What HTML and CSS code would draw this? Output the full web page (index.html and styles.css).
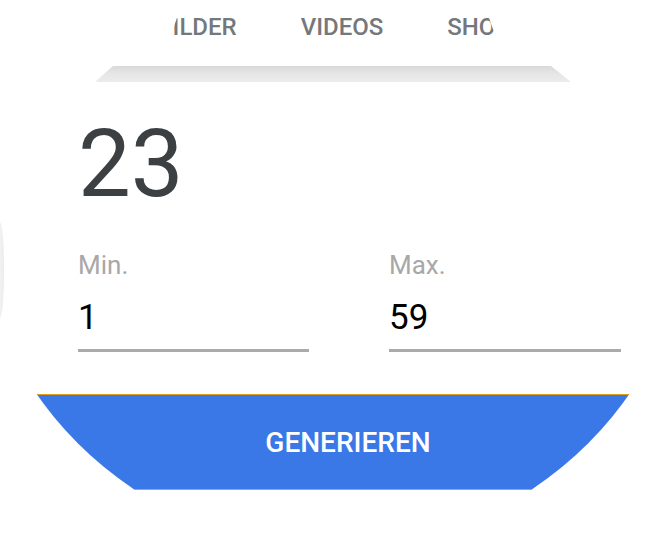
FILE: index.html
```html
<!DOCTYPE html>
<html lang="de">
<head>
    <meta charset="UTF-8">
    <meta name="viewport" content="width=device-width, initial-scale=1.0">
    <title>Zufallszahl</title>
    <link rel="stylesheet" href="styles.css">
</head>
<body>
    <div class="tabs">
        <span class="tab tab-left">BILDER</span>
        <span class="tab">VIDEOS</span>
        <span class="tab tab-right">SHOPPING</span>
    </div>
    <div class="band"></div>

    <div class="rng">
        <div class="result">23</div>
        <div class="fields">
            <div class="field">
                <label class="field-label">Min.</label>
                <div class="field-value">1</div>
            </div>
            <div class="field">
                <label class="field-label">Max.</label>
                <div class="field-value">59</div>
            </div>
        </div>
    </div>

    <div class="btn-wrap">
        <button class="btn">GENERIEREN</button>
    </div>

    <div class="edge"></div>
</body>
</html>
```

FILE: styles.css
```css
body {
    margin: 0;
    background-color: white;
    font-family: Roboto, "Liberation Sans", sans-serif;
    width: 666px;
    height: 541px;
    overflow: hidden;
    position: relative;
}
.tabs {
    display: grid;
    grid-template-columns: 1fr auto 1fr;
    column-gap: 64px;
    padding: 13px 0 25px 18px;
    line-height: 28px;
    clip-path: circle(168px at 333px 80px);
}
.tab {
    font-size: 24px;
    font-weight: 500;
    color: #75787b;
    white-space: nowrap;
}
.tab-left {
    justify-self: end;
}
.tab-right {
    justify-self: start;
}
.band {
    height: 16px;
    margin: 0 95px;
    background: linear-gradient(180deg, #d9d9d9 0%, #e6e6e6 50%, #ececec 100%);
    clip-path: polygon(18px 0, calc(100% - 20px) 0, 100% 100%, 0 100%);
}
.rng {
    padding: 0 45px 0 78px;
}
.result {
    margin-top: 35px;
    font-size: 94px;
    line-height: 94px;
    color: #3c4043;
}
.fields {
    display: grid;
    grid-template-columns: 231px 232px;
    column-gap: 80px;
    margin-top: 39px;
}
.field-label {
    display: block;
    font-size: 26px;
    line-height: 30px;
    color: #a8a8a8;
}
.field-value {
    margin-top: 18px;
    padding-bottom: 11px;
    font-size: 35px;
    line-height: 40px;
    color: #000;
    border-bottom: 3px solid #aaaaaa;
}
.btn-wrap {
    margin-top: 42px;
    padding-left: 36px;
}
.btn {
    display: block;
    width: 624px;
    height: 96px;
    padding: 0;
    border: none;
    border-top: 1px solid #e39d1c;
    border-bottom: 1px solid #e39d1c;
    background-color: #3b78e7;
    color: white;
    font-family: Roboto, "Liberation Sans", sans-serif;
    font-size: 28px;
    font-weight: 500;
    cursor: pointer;
    clip-path: circle(361px at 297px -206px);
}
.edge {
    position: absolute;
    left: 0;
    top: 222px;
    width: 4px;
    height: 96px;
    background: linear-gradient(90deg, #f2f2f2, #ebebeb);
    border-radius: 0 100% 100% 0 / 0 50% 50% 0;
}
```
